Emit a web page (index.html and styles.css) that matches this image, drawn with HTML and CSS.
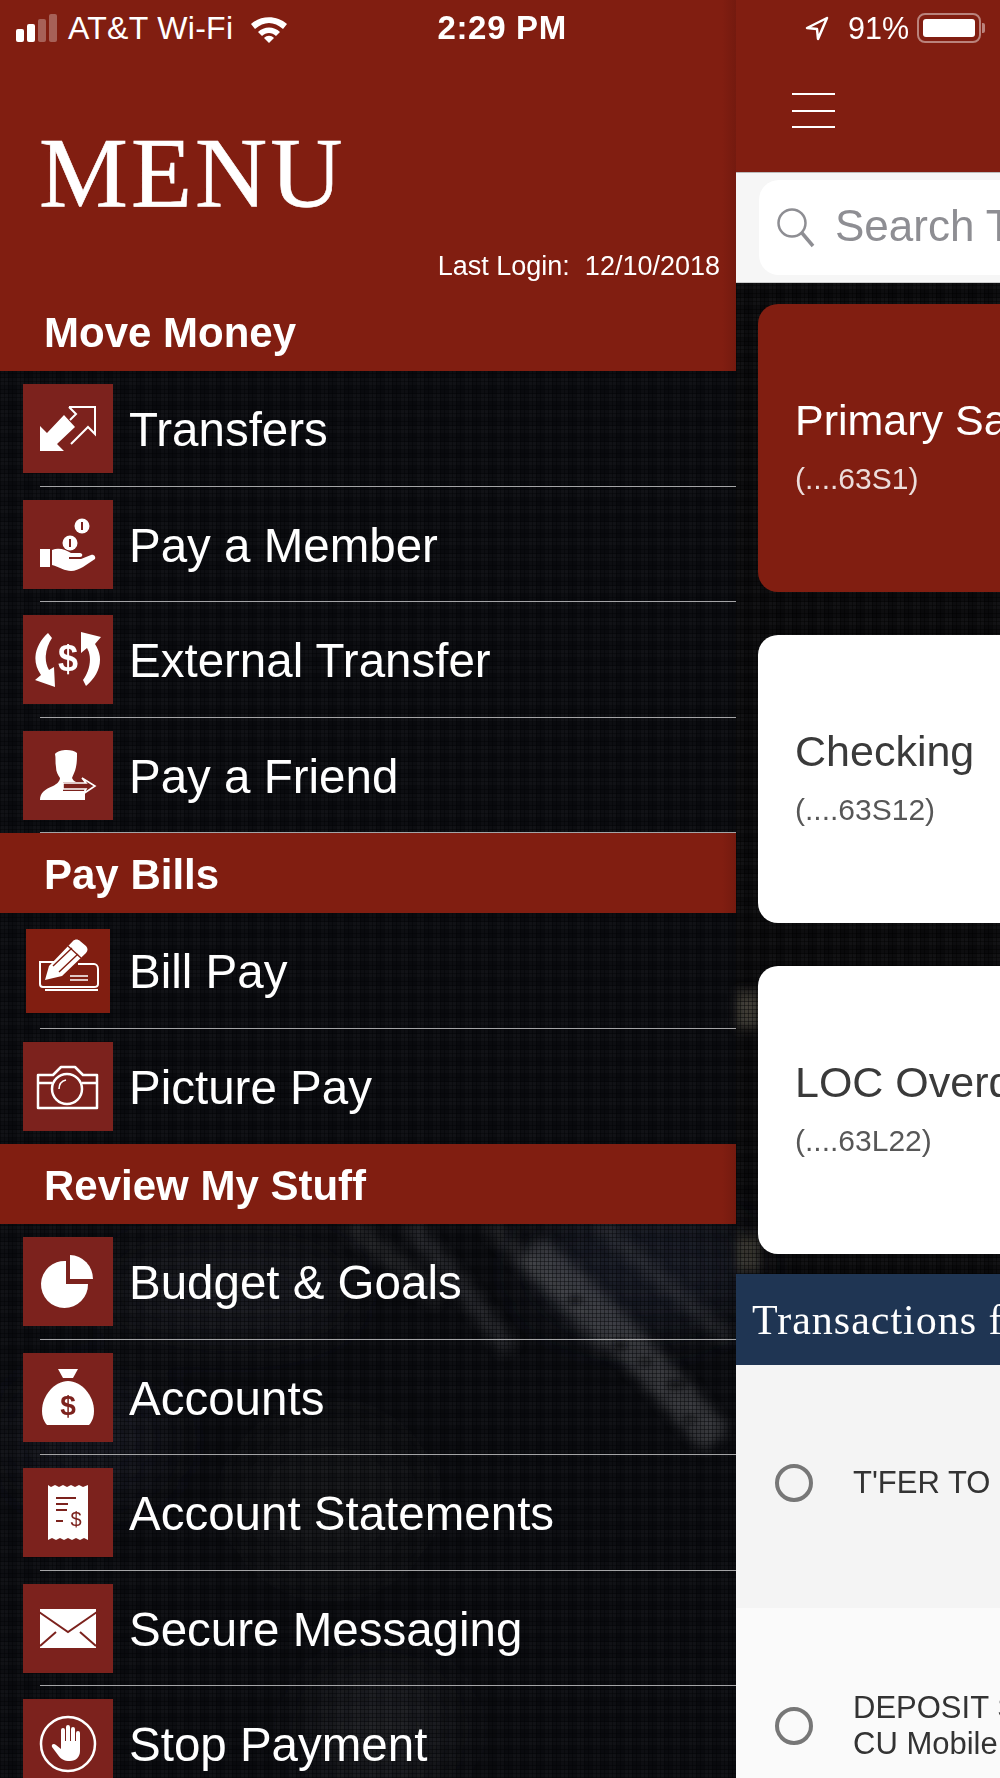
FILE: index.html
```html
<!DOCTYPE html>
<html>
<head>
    <link rel="stylesheet" href="styles.css">
</head>
<body>
    <div class="page">
        <div class="backdrop">
            <svg width="1000" height="1778" viewBox="0 0 1000 1778">
                <defs>
                    <filter id="soft"><feGaussianBlur stdDeviation="6"/></filter>
                    <filter id="softer"><feGaussianBlur stdDeviation="26"/></filter>
                    <filter id="speck"><feGaussianBlur stdDeviation="3"/></filter>
                </defs>
                <g filter="url(#softer)" opacity="0.5">
                    <ellipse cx="230" cy="1290" rx="120" ry="45" fill="#2c2c30"/>
                    <ellipse cx="90" cy="1440" rx="80" ry="60" fill="#20242e"/>
                    <ellipse cx="640" cy="1270" rx="110" ry="60" fill="#262c3a"/>
                    <ellipse cx="380" cy="1730" rx="70" ry="60" fill="#303034"/>
                    <ellipse cx="330" cy="1500" rx="90" ry="80" fill="#1c1c1e"/>
                </g>
                <g filter="url(#soft)" stroke="#6a6a6c" fill="none">
                    <path d="M410 1226 C440 1260 480 1310 510 1350" stroke-width="18" opacity="0.3"/>
                    <path d="M350 1226 C380 1250 410 1275 440 1300" stroke-width="20" opacity="0.25"/>
                    <path d="M490 1226 C530 1265 570 1310 605 1350" stroke-width="16" opacity="0.25"/>
                    <path d="M530 1250 C590 1300 660 1375 716 1440" stroke-width="34" opacity="0.5"/>
                    <path d="M600 1226 C640 1260 690 1305 730 1340" stroke-width="14" opacity="0.25"/>
                    <path d="M748 992 V1028" stroke="#5a5548" stroke-width="22" opacity="0.7"/>
                    <path d="M748 1236 V1272" stroke="#4a463c" stroke-width="22" opacity="0.7"/>
                </g>
                <g filter="url(#speck)" fill="#08080a" opacity="0.8">
                    <ellipse cx="575" cy="1300" rx="7" ry="4"/>
                    <ellipse cx="620" cy="1345" rx="8" ry="5"/>
                    <ellipse cx="645" cy="1362" rx="6" ry="4"/>
                    <ellipse cx="676" cy="1385" rx="9" ry="5"/>
                    <ellipse cx="690" cy="1420" rx="6" ry="4"/>
                </g>
            </svg>
        </div>

        <div class="menu">
            <div class="menu-top">
                <div class="status">
                    <svg class="signal" width="46" height="28" viewBox="0 0 46 28">
                        <rect x="0" y="15" width="8" height="13" rx="2" fill="#fff"/>
                        <rect x="11" y="10" width="8" height="18" rx="2" fill="#fff"/>
                        <rect x="22" y="5" width="8" height="23" rx="2" fill="#fff" opacity="0.3"/>
                        <rect x="33" y="0" width="8" height="28" rx="2" fill="#fff" opacity="0.3"/>
                    </svg>
                    <span class="carrier">AT&amp;T Wi-Fi</span>
                    <svg class="wifi" width="38" height="28" viewBox="0 0 38 28">
                        <path d="M1 9 C11 0 27 0 37 9 L33 14 C24 6 14 6 5 14 Z" fill="#fff"/>
                        <path d="M8 17 C14 11 24 11 30 17 L26 21 C22 17 16 17 12 21 Z" fill="#fff"/>
                        <path d="M14 23 C17 20 21 20 24 23 L19 28 Z" fill="#fff"/>
                    </svg>
                    <span class="clock">2:29 PM</span>
                </div>
                <div class="menu-title">MENU</div>
                <div class="last-login">Last Login:  12/10/2018</div>
            </div>

            <div class="band">Move Money</div>
            <div class="row">
                <div class="icon-box">
                    <svg width="90" height="90" viewBox="0 0 90 90">
                        <path d="M17 42 L24 49 L41 31 L52 43 L34 60 L41 67 H17 Z" fill="#fff"/>
                        <path d="M46 23 H72 V50 L65 43 L48 60 M46 23 L53 30 L47 36" fill="none" stroke="#fff" stroke-width="2"/>
                    </svg>
                </div>
                <span class="label">Transfers</span>
            </div>
            <div class="row">
                <div class="icon-box">
                    <svg width="90" height="90" viewBox="0 0 90 90">
                        <circle cx="59" cy="26" r="7.500" fill="#fff"/>
                        <rect x="58" y="22" width="2" height="8" fill="#7c221d"/>
                        <circle cx="47" cy="43" r="7.500" fill="#fff"/>
                        <rect x="46" y="39" width="2" height="8" fill="#7c221d"/>
                        <rect x="17" y="49" width="10" height="18" fill="#fff"/>
                        <path d="M29 50 C36 47 43 50 48 53 H57 C60 53 60 57 57 57 H46 V59 H58 L68 55 C71 54 73 57 72 59 C64 64 56 71 48 71 C42 71 36 67 29 65 Z" fill="#fff"/>
                    </svg>
                </div>
                <span class="label">Pay a Member</span>
            </div>
            <div class="row">
                <div class="icon-box">
                    <svg width="90" height="90" viewBox="0 0 90 90">
                        <path d="M25 18 C12 30 8 46 18 60 L12 65 L32 72 L31 52 L26 55 C20 45 23 32 29 23 Z" fill="#fff"/>
                        <path d="M63 71 C76 60 82 44 72 29 L78 22 L58 17 L58 38 L64 33 C70 43 66 57 60 65 Z" fill="#fff"/>
                        <text class="glyph-bold" x="45" y="56" font-size="36" fill="#fff" text-anchor="middle">$</text>
                    </svg>
                </div>
                <span class="label">External Transfer</span>
            </div>
            <div class="row">
                <div class="icon-box">
                    <svg width="90" height="90" viewBox="0 0 90 90">
                        <path d="M32 23 C36 18 50 18 54 22 C54 27 54 31 53 36 C52 41 50 44 49 47 C50 49 51 50 53 51 H40 V60 H62 V69 H17 C17 62 22 58 30 55 C34 53 37 50 37 47 C35 44 33 41 33 36 C32 31 33 27 32 23 Z" fill="#fff"/>
                        <path d="M40 52 H63 L59 47 L72 55 L60 63 L63 58 H40 Z" fill="#7c221d" stroke="#fff" stroke-width="1.600"/>
                    </svg>
                </div>
                <span class="label">Pay a Friend</span>
            </div>

            <div class="band">Pay Bills</div>
            <div class="row">
                <div class="icon-box icon-box-small">
                    <svg width="84" height="84" viewBox="0 0 84 84">
                        <path d="M30 33 H14 V55 C14 57 15 58 17 58 H68 C70 58 72 57 72 55 V40 C72 37 70 35 68 35 H52" fill="none" stroke="#fff" stroke-width="2"/>
                        <path d="M19 61 H72" stroke="#fff" stroke-width="2"/>
                        <path d="M19 51 L23 37 L47 12 C49 10 52 10 54 12 L60 17 C62 19 62 22 60 24 L36 47 Z" fill="#fff"/>
                        <path d="M42 17 L55 29 M27 37 L46 19 M33 43 L52 25" stroke="#801e11" stroke-width="1.400" fill="none"/>
                        <path d="M44 47 H62 M44 51 H62" stroke="#fff" stroke-width="1.600"/>
                    </svg>
                </div>
                <span class="label">Bill Pay</span>
            </div>
            <div class="row row-last">
                <div class="icon-box">
                    <svg width="90" height="90" viewBox="0 0 90 90">
                        <path d="M15 33 H30 L38 25 H52 L60 33 H74 V66 H15 Z M15 41 H29 M59 41 H74" fill="none" stroke="#fff" stroke-width="2.500" stroke-linejoin="round"/>
                        <circle cx="44" cy="47" r="15" fill="none" stroke="#fff" stroke-width="2.500"/>
                        <path d="M36 47 C36 42 39 39 43 38" fill="none" stroke="#fff" stroke-width="1.600"/>
                    </svg>
                </div>
                <span class="label">Picture Pay</span>
            </div>

            <div class="band">Review My Stuff</div>
            <div class="row">
                <div class="icon-box">
                    <svg width="90" height="90" viewBox="0 0 90 90">
                        <path d="M47 18 A24 24 0 0 1 70 42 H47 Z" fill="#fff"/>
                        <path d="M43 24 A23.500 23.500 0 1 0 65 47 H43 Z" fill="#fff"/>
                    </svg>
                </div>
                <span class="label">Budget &amp; Goals</span>
            </div>
            <div class="row">
                <div class="icon-box">
                    <svg width="90" height="90" viewBox="0 0 90 90">
                        <path d="M35 16 H55 L50 25 H40 Z" fill="#fff"/>
                        <path d="M45 28 C58 28 71 42 71 58 C71 64 69 69 66 72 H24 C21 69 19 64 19 58 C19 42 32 28 45 28 Z" fill="#fff"/>
                        <text class="glyph-bold" x="45" y="62" font-size="28" fill="#7c221d" text-anchor="middle">$</text>
                    </svg>
                </div>
                <span class="label">Accounts</span>
            </div>
            <div class="row">
                <div class="icon-box">
                    <svg width="90" height="90" viewBox="0 0 90 90">
                        <path d="M25 17 L28 19 L32 17 L36 19 L40 17 L44 19 L48 17 L52 19 L56 17 L60 19 L65 17 V72 L61 70 L57 72 L53 70 L49 72 L45 70 L41 72 L37 70 L33 72 L29 70 L25 72 Z" fill="#fff"/>
                        <path d="M33 30 H53 M33 36 H45 M33 42 H44 M33 53 H40" stroke="#7c221d" stroke-width="1.800"/>
                        <text class="glyph" x="53" y="58" font-size="20" fill="#7c221d" text-anchor="middle">$</text>
                    </svg>
                </div>
                <span class="label">Account Statements</span>
            </div>
            <div class="row">
                <div class="icon-box">
                    <svg width="90" height="90" viewBox="0 0 90 90">
                        <rect x="17" y="25" width="56" height="39" fill="#fff"/>
                        <path d="M16 28 L45 48 L74 28 M17 62 L33 48 M73 62 L57 48" fill="none" stroke="#7c221d" stroke-width="2"/>
                    </svg>
                </div>
                <span class="label">Secure Messaging</span>
            </div>
            <div class="row row-last">
                <div class="icon-box">
                    <svg width="90" height="90" viewBox="0 0 90 90">
                        <circle cx="45" cy="45" r="27" fill="none" stroke="#fff" stroke-width="2.500"/>
                        <path d="M40 46 V31 M45 46 V28 M50 46 V30 M55 48 V34" stroke="#fff" stroke-width="4" stroke-linecap="round"/>
                        <path d="M38 42 H57 V52 C57 58 53 62 47 62 C41 62 38 60 35 56 L29 48 C28 45 31 44 33 46 L38 50 Z" fill="#fff"/>
                    </svg>
                </div>
                <span class="label">Stop Payment</span>
            </div>
        </div>

        <div class="main">
            <div class="main-top">
                <div class="status status-right">
                    <svg width="24" height="25" viewBox="0 0 24 25">
                        <path d="M22 2 L2 12 L12 13 L13 23 Z" fill="none" stroke="#fff" stroke-width="2.500" stroke-linejoin="round"/>
                    </svg>
                    <span class="battery-text">91%</span>
                    <div class="battery"><div class="battery-fill"></div></div>
                    <div class="battery-tip"></div>
                </div>
                <div class="hamburger">
                    <div class="hamburger-line"></div>
                    <div class="hamburger-line"></div>
                    <div class="hamburger-line"></div>
                </div>
            </div>
            <div class="search-bar">
                <div class="search-box">
                    <svg width="38" height="40" viewBox="0 0 38 40">
                        <circle cx="15" cy="15" r="13.500" fill="none" stroke="#8e8e93" stroke-width="2.500"/>
                        <path d="M25 25 L36 38" stroke="#8e8e93" stroke-width="3.500"/>
                    </svg>
                    <span class="search-text">Search Transactions</span>
                </div>
            </div>

            <div class="card card-active">
                <div class="card-title">Primary Savings</div>
                <div class="card-sub">(....63S1)</div>
            </div>
            <div class="card">
                <div class="card-title">Checking</div>
                <div class="card-sub">(....63S12)</div>
            </div>
            <div class="card card-last">
                <div class="card-title">LOC Overdraft</div>
                <div class="card-sub">(....63L22)</div>
            </div>

            <div class="list-head">Transactions for Primary Savings</div>
            <div class="tx tx-odd">
                <div class="radio"></div>
                <div class="tx-text">T'FER TO CHECKING</div>
            </div>
            <div class="tx">
                <div class="radio"></div>
                <div class="tx-text">DEPOSIT SHARE<br>CU Mobile Deposit</div>
            </div>
        </div>
    </div>
</body>
</html>
```

FILE: styles.css
```css
html, body {
    margin: 0;
    padding: 0;
}
body {
    font-family: "Liberation Sans", Arial, sans-serif;
    color: white;
}
.page {
    position: relative;
    display: flex;
    width: 1000px;
    height: 1778px;
    overflow: hidden;
    background-color: #09090b;
}
.backdrop {
    position: absolute;
    top: 0;
    left: 0;
    width: 1000px;
    height: 1778px;
}
.backdrop::after {
    content: "";
    position: absolute;
    top: 0;
    left: 0;
    width: 100%;
    height: 100%;
    background-image:
        repeating-linear-gradient(90deg, rgba(0,0,0,0.4) 0 1px, transparent 1px 4px),
        repeating-linear-gradient(0deg, rgba(0,0,0,0.4) 0 1px, transparent 1px 4px),
        repeating-linear-gradient(90deg, rgba(255,255,255,0.018) 0 8px, transparent 8px 16px),
        repeating-linear-gradient(0deg, rgba(255,255,255,0.018) 0 8px, transparent 8px 16px);
}

/* left drawer */
.menu {
    position: relative;
    width: 736px;
    flex-shrink: 0;
    background-color: rgba(14,22,40,0.12);
}
.menu-top {
    height: 291px;
    background: linear-gradient(90deg, #811e11 calc(100% - 14px), #741a0f);
}
.status {
    display: flex;
    align-items: center;
    height: 56px;
    padding-left: 16px;
}
.signal {
    margin-right: 6px;
}
.carrier {
    font-size: 32px;
    letter-spacing: 0.3px;
}
.wifi {
    margin-left: 17px;
    margin-top: 2px;
}
.clock {
    margin-left: auto;
    margin-right: 169px;
    font-size: 33px;
    font-weight: bold;
    letter-spacing: 0.7px;
}
.menu-title {
    margin-top: 67px;
    padding-left: 39px;
    font-family: "Liberation Serif", "Times New Roman", serif;
    font-size: 100px;
    line-height: 100px;
    letter-spacing: 3px;
    -webkit-text-stroke: 0.6px white;
}
.last-login {
    margin-top: 28px;
    padding-right: 16px;
    text-align: right;
    font-size: 27px;
    line-height: 30px;
    white-space: pre;
}
.band {
    display: flex;
    align-items: center;
    box-sizing: border-box;
    height: 80px;
    padding: 4px 0 0 44px;
    background: linear-gradient(90deg, #811e11 calc(100% - 14px), #741a0f);
    font-size: 42px;
    font-weight: bold;
}
.row {
    display: flex;
    align-items: center;
    box-sizing: border-box;
    height: 115.500px;
    padding-left: 23px;
    background: linear-gradient(#a4a4a6, #a4a4a6) no-repeat right bottom / calc(100% - 40px) 1px;
}
.row-last {
    background: none;
}
.icon-box {
    display: flex;
    width: 90px;
    height: 89px;
    flex-shrink: 0;
    overflow: hidden;
    background-color: #7c221d;
}
.icon-box-small {
    width: 84px;
    height: 84px;
    margin: 0 3px;
    background-color: #811e11;
}
.label {
    margin-left: 16px;
    padding-top: 2px;
    font-size: 47.500px;
    white-space: nowrap;
}
.glyph-bold {
    font-family: "Liberation Sans", Arial, sans-serif;
    font-weight: bold;
}
.glyph {
    font-family: "Liberation Sans", Arial, sans-serif;
}

/* right side, cut off by the window */
.main {
    position: relative;
    width: 264px;
    overflow: hidden;
}
.main-top {
    height: 172px;
    background-color: #811e11;
}
.status-right {
    padding-left: 69px;
}
.battery-text {
    margin-left: 19px;
    font-size: 30.500px;
}
.battery {
    box-sizing: border-box;
    width: 64px;
    height: 30px;
    margin-left: 8px;
    padding: 4px;
    border: 2px solid rgba(255,255,255,0.45);
    border-radius: 8px;
}
.battery-fill {
    width: 100%;
    height: 100%;
    border-radius: 3px;
    background-color: white;
}
.battery-tip {
    width: 3px;
    height: 10px;
    margin-left: 1px;
    border-radius: 0 2px 2px 0;
    background-color: rgba(255,255,255,0.45);
}
.hamburger {
    display: flex;
    flex-direction: column;
    gap: 14.500px;
    width: 43px;
    margin: 37px 0 0 56px;
}
.hamburger-line {
    height: 2px;
    background-color: white;
}
.search-bar {
    box-sizing: border-box;
    height: 111px;
    padding: 7px 0 7px 23px;
    border-top: 1px solid #bbb;
    border-bottom: 1px solid #ccc;
    background-color: #f6f6f6;
}
.search-box {
    display: flex;
    align-items: center;
    width: 500px;
    height: 95px;
    padding-left: 18px;
    border-radius: 20px;
    background-color: white;
}
.search-text {
    margin-left: 20px;
    margin-bottom: 4px;
    color: #8e8e93;
    font-size: 44px;
    white-space: nowrap;
}
.card {
    display: flex;
    flex-direction: column;
    justify-content: center;
    box-sizing: border-box;
    width: 500px;
    height: 288px;
    margin: 0 0 43px 22px;
    padding: 0 0 6px 37px;
    border-radius: 20px;
    background-color: white;
    color: #3a3a3a;
}
.card-active {
    margin-top: 21px;
    background-color: #811e11;
    color: white;
}
.card-last {
    margin-bottom: 20px;
}
.card-title {
    font-size: 43px;
    line-height: 56px;
    white-space: nowrap;
}
.card-sub {
    margin-top: 11px;
    font-size: 30px;
    line-height: 40px;
    opacity: 0.85;
}
.list-head {
    box-sizing: border-box;
    height: 91px;
    padding: 22px 0 0 16px;
    background-color: #1f3553;
    font-family: "Liberation Serif", "Times New Roman", serif;
    font-size: 42px;
    line-height: 48px;
    letter-spacing: 1px;
    white-space: nowrap;
}
.tx {
    display: flex;
    align-items: center;
    height: 236px;
    padding-left: 39px;
    background-color: #fafafa;
    color: #333;
}
.tx-odd {
    box-sizing: border-box;
    height: 243px;
    padding-bottom: 7px;
    background-color: #f4f4f4;
}
.radio {
    box-sizing: border-box;
    width: 38px;
    height: 38px;
    flex-shrink: 0;
    border: 4px solid #777;
    border-radius: 50%;
}
.tx-text {
    margin-left: 40px;
    font-size: 31px;
    line-height: 36px;
    white-space: nowrap;
}
```
